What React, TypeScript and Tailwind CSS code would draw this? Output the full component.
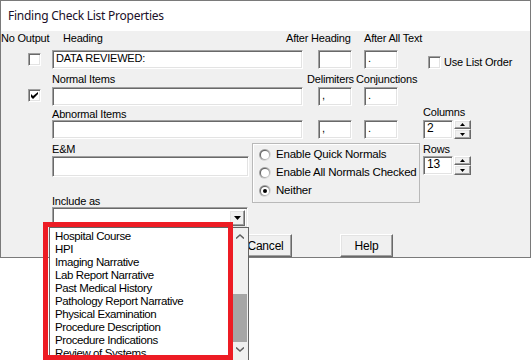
import React from "react";

const sunken =
  "bg-white border border-t-[#a0a0a0] border-l-[#a0a0a0] border-r-white border-b-white shadow-[inset_1px_1px_0_#696969,inset_-1px_-1px_0_#e3e3e3]";
const raised =
  "bg-[#f0f0f0] border border-t-white border-l-white border-r-[#696969] border-b-[#696969] shadow-[inset_-1px_-1px_0_#a0a0a0,inset_1px_1px_0_#e3e3e3]";

const TextBox = ({ className = "", value = "" }: { className?: string; value?: string }) => (
  <div className={`${sunken} ${className} pl-[3px] leading-[15px] overflow-hidden whitespace-nowrap`}>{value}</div>
);

const CheckBox = ({ checked = false, className = "" }: { checked?: boolean; className?: string }) => (
  <div className={`${sunken} w-[13px] h-[13px] flex items-center justify-center ${className}`}>
    {checked && (
      <svg width="7" height="7" viewBox="0 0 7 7">
        <path d="M0 2v3l2 2 5-5V-0L2 4z" fill="#000" />
      </svg>
    )}
  </div>
);

const Radio = ({ checked = false }: { checked?: boolean }) => (
  <div className="w-[12px] h-[12px] rounded-full bg-gradient-to-br from-[#808080] to-white p-[1px]">
    <div className="w-full h-full rounded-full bg-gradient-to-br from-[#404040] to-[#e3e3e3] p-[1px]">
      <div className="w-full h-full rounded-full bg-white flex items-center justify-center">
        {checked && <div className="w-[4px] h-[4px] rounded-full bg-black" />}
      </div>
    </div>
  </div>
);

const Spin = ({ value }: { value: string }) => (
  <div className="flex h-[19px]">
    <TextBox className="w-[30px] h-[19px] text-[12px]" value={value} />
    <div className="ml-[1px] flex flex-col w-[17px]">
      <div className={`${raised} h-[9px] flex items-center justify-center`}>
        <svg width="5" height="3" viewBox="0 0 5 3"><path d="M2.5 0L5 3H0z" fill="#000" /></svg>
      </div>
      <div className={`${raised} h-[10px] flex items-center justify-center`}>
        <svg width="5" height="3" viewBox="0 0 5 3"><path d="M0 0h5L2.5 3z" fill="#000" /></svg>
      </div>
    </div>
  </div>
);

const Button = ({ label, className = "" }: { label: string; className?: string }) => (
  <div className={`${raised} w-[53px] h-[23px] flex items-center justify-center text-[12px] ${className}`}>{label}</div>
);

const items = [
  "Hospital Course",
  "HPI",
  "Imaging Narrative",
  "Lab Report Narrative",
  "Past Medical History",
  "Pathology Report Narrative",
  "Physical Examination",
  "Procedure Description",
  "Procedure Indications",
  "Review of Systems",
];

export default function App() {
  return (
    <div className="relative w-[532px] h-[360px] bg-white overflow-hidden font-['Liberation_Sans',Arial,sans-serif] text-[11px] tracking-[-0.2px] text-black">
      {/* dialog window */}
      <div className="w-[531px] h-[258px] border border-[#7a7a7a] flex flex-col">
        <div className="h-[30px] bg-white pl-[7px] flex items-center font-['Noto_Sans',sans-serif] text-[12px] tracking-[-0.25px] text-[#1a1028]">
          Finding Check List Properties
        </div>
        <div className="flex-1 bg-[#f0f0f0] flex flex-col whitespace-nowrap">
          {/* row: column headers */}
          <div className="mt-[1px] h-[13px] leading-[13px] flex">
            <span className="w-[62px]">No Output</span>
            <span className="w-[223px]">Heading</span>
            <span className="w-[78px]">After Heading</span>
            <span>After All Text</span>
          </div>
          {/* row: heading */}
          <div className="mt-[5px] h-[19px] flex items-start">
            <CheckBox className="ml-[27px] mt-[3px]" />
            <TextBox className="ml-[11px] w-[251px] h-[19px]" value="DATA REVIEWED:" />
            <TextBox className="ml-[15px] w-[34px] h-[19px]" />
            <TextBox className="ml-[12px] w-[34px] h-[19px]" value="." />
            <CheckBox className="ml-[30px] mt-[6px]" />
            <span className="ml-[3px] mt-[6px] leading-[13px]">Use List Order</span>
          </div>
          {/* row: normal items labels */}
          <div className="mt-[4px] h-[13px] leading-[13px] flex">
            <span className="ml-[51px] w-[255px]">Normal Items</span>
            <span className="w-[49px]">Delimiters</span>
            <span>Conjunctions</span>
          </div>
          <div className="mt-[1px] h-[19px] flex items-start">
            <CheckBox checked className="ml-[27px] mt-[2px]" />
            <TextBox className="ml-[11px] w-[251px] h-[19px]" />
            <TextBox className="ml-[15px] w-[34px] h-[19px]" value="," />
            <TextBox className="ml-[12px] w-[34px] h-[19px]" value="." />
          </div>
          {/* row: abnormal items */}
          <div className="mt-[1px] h-[13px] leading-[13px] flex">
            <span className="ml-[51px] w-[371px] mt-[1px]">Abnormal Items</span>
            <span className="-mt-[1px]">Columns</span>
          </div>
          <div className="h-[19px] flex items-start">
            <TextBox className="ml-[51px] w-[251px] h-[19px]" />
            <TextBox className="ml-[15px] w-[34px] h-[19px]" value="," />
            <TextBox className="ml-[12px] w-[34px] h-[19px]" value="." />
            <div className="ml-[25px]">
              <Spin value="2" />
            </div>
          </div>
          {/* lower section */}
          <div className="mt-[4px] flex items-start">
            <div className="ml-[51px] w-[197px] flex flex-col">
              <span className="h-[13px] leading-[13px]">E&amp;M</span>
              <TextBox className="w-[197px] h-[21px]" />
              <span className="mt-[18px] h-[13px] leading-[13px]">Include as</span>
              <div className={`${sunken} w-[196px] h-[21px] mt-[-1px] flex justify-end items-start p-[2px]`}>
                <div className={`${raised} w-[16px] h-[16px] flex items-center justify-center`}>
                  <svg width="7" height="4" viewBox="0 0 7 4"><path d="M0 0h7L3.5 4z" fill="#000" /></svg>
                </div>
              </div>
            </div>
            <div className="ml-[3px] w-[168px] h-[60px] border border-[#b9b9b9] shadow-[inset_1px_1px_0_white] flex flex-col pl-[6px] pt-[2px] text-[11.5px] tracking-[-0.2px]">
              <div className="h-[18px] flex items-center">
                <Radio />
                <span className="ml-[5px]">Enable Quick Normals</span>
              </div>
              <div className="h-[18px] flex items-center">
                <Radio />
                <span className="ml-[5px]">Enable All Normals Checked</span>
              </div>
              <div className="h-[18px] flex items-center">
                <Radio checked />
                <span className="ml-[5px]">Neither</span>
              </div>
            </div>
            <div className="ml-[3px] flex flex-col">
              <span className="h-[13px] leading-[13px]">Rows</span>
              <Spin value="13" />
            </div>
          </div>
          {/* buttons */}
          <div className="mt-auto h-[23px] flex">
            <Button label="OK" className="ml-[137px]" />
            <Button label="Cancel" className="ml-[48px]" />
            <Button label="Help" className="ml-[48px]" />
          </div>
        </div>
      </div>

      {/* dropped-down list of the combo box */}
      <div className="absolute left-[49px] top-[227px] w-[200px] h-[140px] bg-white border border-[#646464] flex">
        <div className="flex-1 pl-[5px] pt-[2px] text-[11.5px] tracking-[-0.4px] leading-[13px]">
          {items.map((it) => (
            <div key={it} className="h-[13px] whitespace-nowrap">{it}</div>
          ))}
        </div>
        <div className="w-[16px] bg-[#f0f0f0] flex flex-col">
          <div className="h-[17px] flex items-center justify-center">
            <svg width="8" height="5" viewBox="0 0 8 5"><path d="M0 4.5L4 1l4 3.5" stroke="#606060" strokeWidth="1.5" fill="none" /></svg>
          </div>
          <div className="flex-1 flex flex-col justify-end">
            <div className="mx-[1px] h-[48px] bg-[#a6a6a6]" />
            <div className="h-[24px] flex items-start justify-center pt-[5px]">
              <svg width="8" height="5" viewBox="0 0 8 5"><path d="M0 0.5L4 4l4-3.5" stroke="#606060" strokeWidth="1.5" fill="none" /></svg>
            </div>
          </div>
        </div>
      </div>

      {/* red highlight */}
      <div className="absolute left-[43px] top-[222px] w-[190px] h-[138px] border-[5px] border-[#ed1c24]" />
    </div>
  );
}
